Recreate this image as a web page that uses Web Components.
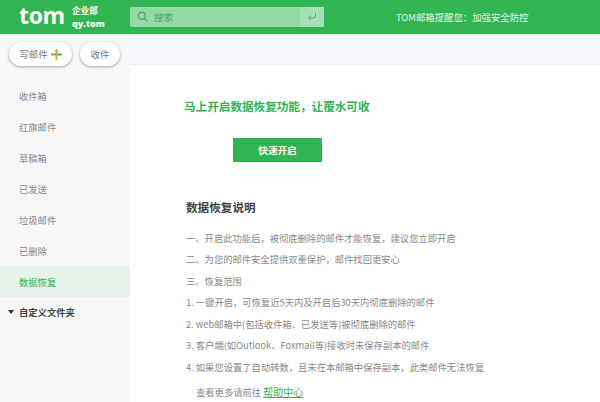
<!DOCTYPE html>
<html lang="zh"><head><meta charset="utf-8"><title>TOM</title>
<style>
html,body{margin:0;padding:0;width:600px;height:402px;overflow:hidden;background:#fff;font-family:"Noto Sans CJK SC","Liberation Sans",sans-serif}
body{display:flex;flex-direction:column}
app-body{flex:1;min-height:0}
</style></head><body>
<app-header></app-header>
<app-body>
  <app-sidebar></app-sidebar>
  <app-main></app-main>
</app-body>
<script>
function def(name,html){customElements.define(name,class extends HTMLElement{constructor(){super();this.attachShadow({mode:'open'}).innerHTML=html}})}
const font='"Noto Sans CJK SC","Liberation Sans",sans-serif';
def('app-header',`<style>
:host{display:flex;height:34px;background:#30b552;color:#fff;align-items:center;font-family:${font};flex:none}
.logo{font:700 23px/1 "Open Sans","Liberation Sans",sans-serif;margin-left:19px;width:53px;letter-spacing:-.3px;padding-bottom:3px}
.sub{font-size:8.6px;line-height:14px;font-weight:700;width:58px;opacity:.95}
.sub b{display:block;font-family:"Open Sans","Liberation Sans",sans-serif;font-size:9px}
.search{width:194px;height:20px;background:#93d9a3;border-radius:2px 0 0 2px;display:flex;align-items:center;margin-bottom:1px;position:relative;color:#4aa565;font-size:9.6px}
.search svg.s{margin:0 6px 0 7px}
.enter{position:absolute;right:0;top:0;width:24px;height:20px;background:#a5dfb3;display:flex;align-items:center;justify-content:center}
.msg{margin-left:72px;font-size:9.4px;color:#eaf7ed;white-space:nowrap;margin-bottom:1px}
</style>
<div class="logo">tom</div>
<div class="sub">企业邮<b>qy.tom</b></div>
<div class="search">
<svg class="s" width="11" height="11" viewBox="0 0 11 11" fill="none" stroke="#4f9f68" stroke-width="1.2"><circle cx="4.8" cy="4.8" r="3.6"/><path d="M7.4 7.4l2.8 2.8"/></svg>搜索
<div class="enter"><svg width="10" height="10" viewBox="0 0 10 10" fill="none" stroke="#58a873" stroke-width="1"><path d="M8.5 1v2.5a2.5 2.5 0 0 1-2.5 2.5H1.5M4 3.5L1.5 6 4 8.5"/></svg></div>
</div>
<div class="msg">TOM邮箱提醒您：加强安全防控</div>`);

def('app-body',`<style>:host{display:flex;width:600px;font-family:${font}}</style><slot></slot>`);

def('pill-button',`<style>
:host{display:inline-flex;align-items:center;justify-content:center;height:24px;background:#fff;border-radius:12px;box-shadow:0 1px 3px rgba(0,0,0,.35);font-size:9.4px;color:#777;box-sizing:border-box;flex:none}
</style><slot></slot>`);

def('nav-item',`<style>
:host{display:flex;align-items:center;height:31px;padding-left:19px;font-size:9.3px;color:#888}
:host([active]){background:#e4f2e8;color:#30b552}
</style><slot></slot>`);

def('app-sidebar',`<style>
:host{display:block;width:130px;height:368px;background:#f7f7f7;flex:none}
.top{display:flex;gap:8px;padding:8px 0 0 9px;height:24px;margin-bottom:14px}
pill-button:first-child{width:63px;gap:3px}
pill-button:last-child{width:40px}
.tree{display:flex;align-items:center;height:31px;padding-left:8px;font-size:9.3px;font-weight:700;color:#444;gap:5px;margin-top:-1px}
.tri{width:0;height:0;border:3.5px solid transparent;border-top:4px solid #333;border-bottom:0}
</style>
<div class="top">
<pill-button>写邮件<svg width="11" height="11" viewBox="0 0 11 11"><path d="M0 5.5h5.5" stroke="#e8783a" stroke-width="2"/><path d="M5.5 5.5H11" stroke="#46b04f" stroke-width="2"/><path d="M5.5 0v5.5" stroke="#7dbb3e" stroke-width="2"/><path d="M5.5 5.5V11" stroke="#e0b030" stroke-width="2"/></svg></pill-button>
<pill-button>收件</pill-button>
</div>
<nav-item>收件箱</nav-item>
<nav-item>红旗邮件</nav-item>
<nav-item>草稿箱</nav-item>
<nav-item>已发送</nav-item>
<nav-item>垃圾邮件</nav-item>
<nav-item>已删除</nav-item>
<nav-item active>数据恢复</nav-item>
<div class="tree"><span class="tri"></span>自定义文件夹</div>`);

def('app-main',`<style>
:host{display:flex;flex-direction:column;flex:1;min-width:0;background:#fff}
.strip{height:31px;background:#f6f7fa;border-bottom:1px solid #efefef;box-sizing:border-box;flex:none}
.c{padding:33px 0 0 56px}
h1{margin:0;font-size:11.6px;line-height:16px;font-weight:700;color:#30b552;margin-left:-2px}
.btn{width:89px;height:24px;background:#30b552;color:#fff;font-size:9.6px;font-weight:700;display:flex;align-items:center;justify-content:center;margin:24px 0 0 47px}
h2{margin:37px 0 0;font-size:11.6px;line-height:16px;font-weight:700;color:#444}
p{margin:0;font-size:9.3px;line-height:21.5px;color:#888;white-space:nowrap}
.list{margin-top:12.5px}
.more{padding-left:10px;margin-top:2.5px}
a{color:#30b552;text-decoration:underline;font-size:10px}
</style>
<div class="strip"></div>
<div class="c">
<h1>马上开启数据恢复功能，让覆水可收</h1>
<div class="btn">快速开启</div>
<h2>数据恢复说明</h2>
<div class="list">
<p>一、开启此功能后，被彻底删除的邮件才能恢复，建议您立即开启</p>
<p>二、为您的邮件安全提供双重保护，邮件找回更安心</p>
<p>三、恢复范围</p>
<p>1. 一键开启，可恢复近5天内及开启后30天内彻底删除的邮件</p>
<p>2. web邮箱中(包括收件箱、已发送等)被彻底删除的邮件</p>
<p>3. 客户端(如Outlook、Foxmail等)接收时未保存副本的邮件</p>
<p>4. 如果您设置了自动转数，且未在本邮箱中保存副本，此类邮件无法恢复</p>
<p class="more">查看更多请前往 <a>帮助中心</a></p>
</div>
</div>`);
</script>
</body></html>
